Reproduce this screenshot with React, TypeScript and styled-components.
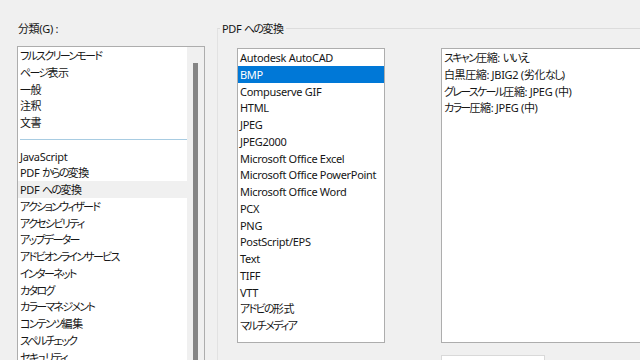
import * as React from 'react';
import styled, { createGlobalStyle } from 'styled-components';

const GlobalStyle = createGlobalStyle`
  html, body {
    margin: 0;
    padding: 0;
    background: #f0f0f0;
    overflow: hidden;
  }
  body {
    font-family: "Noto Sans", "Noto Sans CJK JP", sans-serif;
    font-size: 11px;
    font-feature-settings: "palt";
    color: #161616;
  }
`;

const ROW = 16.75;

const Dialog = styled.div`
  display: flex;
  align-items: flex-start;
  width: 640px;
  height: 360px;
  padding: 20px 0 0 17px;
  box-sizing: border-box;
  overflow: hidden;
`;

const CategoryColumn = styled.div`
  display: flex;
  flex-direction: column;
  flex: none;
  width: 188px;
`;

const Caption = styled.div`
  height: 16px;
  line-height: 16px;
  padding-top: 1px;
  margin: 0 0 9px 1px;
`;

const ListBox = styled.div<{ $width: number; $height: number }>`
  display: flex;
  flex: none;
  width: ${({ $width }) => `${$width}px`};
  height: ${({ $height }) => `${$height}px`};
  box-sizing: border-box;
  background: #fff;
  border: 1px solid #adadad;
  overflow: hidden;
`;

const Items = styled.div`
  display: flex;
  flex-direction: column;
  flex: 1;
  min-width: 0;
`;

const Row = styled.div<{ $selected?: boolean; $hover?: boolean }>`
  height: ${ROW}px;
  line-height: ${ROW - 1}px;
  padding: 1px 0 0 2px;
  box-sizing: border-box;
  white-space: nowrap;
  background: ${({ $selected, $hover }) => ($selected ? '#0078d7' : $hover ? '#f0f0f0' : 'transparent')};
  color: ${({ $selected }) => ($selected ? '#fff' : '#161616')};
`;

const Separator = styled.div`
  display: flex;
  align-items: center;
  height: ${ROW}px;
  padding-left: 2px;

  &::after {
    content: '';
    flex: 1;
    height: 1px;
    background: #a8cce2;
  }
`;

const ScrollTrack = styled.div`
  flex: none;
  width: 17px;
  padding: 16px 0 0 6px;
  box-sizing: border-box;
  background: #f0f0f0;
`;

const ScrollThumb = styled.div`
  width: 5px;
  height: 100%;
  background: #858585;
`;

const Group = styled.div`
  display: flex;
  flex-direction: column;
  flex: none;
  width: 460px;
  height: 400px;
  margin: 8px 0 0 12px;
  border-top: 1px solid #dcdcdc;
  border-left: 1px solid #e2e2e2;
`;

const Legend = styled.div`
  align-self: flex-start;
  height: 16px;
  line-height: 16px;
  margin: -8px 0 0 2px;
  padding: 0 2px;
  background: #f0f0f0;
`;

const GroupBody = styled.div`
  display: flex;
  align-items: flex-start;
  gap: 56px;
  margin-top: 11px;
  padding-left: 19px;
`;

const SettingsColumn = styled.div`
  display: flex;
  flex-direction: column;
  gap: 12px;
`;

const Field = styled.div`
  width: 104px;
  height: 22px;
  box-sizing: border-box;
  background: #fff;
  border: 1px solid #d9d9d9;
`;

// Windows UI fonts set kana much narrower than Noto does, so runs are tightened per script
const Kana = styled.span`
  letter-spacing: -1.7px;
`;

const Kanji = styled.span`
  letter-spacing: -0.4px;
`;

const Latin = styled.span`
  letter-spacing: -0.3px;
`;

const Label = ({ text }: { text: string }) => (
  <>
    {text
      .split(/([\u3040-\u30ff]+|[\u4e00-\u9fff]+)/)
      .filter((part) => part !== '')
      .map((part, i) =>
        /[\u3040-\u30ff]/.test(part) ? (
          <Kana key={i}>{part}</Kana>
        ) : /[\u4e00-\u9fff]/.test(part) ? (
          <Kanji key={i}>{part}</Kanji>
        ) : (
          <Latin key={i}>{part}</Latin>
        ),
      )}
  </>
);

const categoriesTop = ['フルスクリーンモード', 'ページ表示', '一般', '注釈', '文書'];

const categoriesBottom = [
  'JavaScript',
  'PDF からの変換',
  'PDF への変換',
  'アクションウィザード',
  'アクセシビリティ',
  'アップデーター',
  'アドビオンラインサービス',
  'インターネット',
  'カタログ',
  'カラーマネジメント',
  'コンテンツ編集',
  'スペルチェック',
  'セキュリティ',
];

const formats = [
  'Autodesk AutoCAD',
  'BMP',
  'Compuserve GIF',
  'HTML',
  'JPEG',
  'JPEG2000',
  'Microsoft Office Excel',
  'Microsoft Office PowerPoint',
  'Microsoft Office Word',
  'PCX',
  'PNG',
  'PostScript/EPS',
  'Text',
  'TIFF',
  'VTT',
  'アドビの形式',
  'マルチメディア',
];

const settings = [
  'スキャン圧縮: いいえ',
  '白黒圧縮: JBIG2 (劣化なし)',
  'グレースケール圧縮: JPEG (中)',
  'カラー圧縮: JPEG (中)',
];

export default function App() {
  return (
    <>
      <GlobalStyle />
      <Dialog>
        <CategoryColumn>
          <Caption>
            <Label text="分類(G) :" />
          </Caption>
          <ListBox $width={188} $height={330}>
            <Items>
              {categoriesTop.map((name) => (
                <Row key={name}>
                  <Label text={name} />
                </Row>
              ))}
              <Separator />
              {categoriesBottom.map((name) => (
                <Row key={name} $hover={name === 'PDF への変換'}>
                  <Label text={name} />
                </Row>
              ))}
            </Items>
            <ScrollTrack>
              <ScrollThumb />
            </ScrollTrack>
          </ListBox>
        </CategoryColumn>

        <Group>
          <Legend>
            <Label text="PDF への変換" />
          </Legend>
          <GroupBody>
            <ListBox $width={148} $height={295}>
              <Items>
                {formats.map((name) => (
                  <Row key={name} $selected={name === 'BMP'}>
                    <Label text={name} />
                  </Row>
                ))}
              </Items>
            </ListBox>
            <SettingsColumn>
              <ListBox $width={220} $height={295}>
                <Items>
                  {settings.map((line) => (
                    <Row key={line}>
                      <Label text={line} />
                    </Row>
                  ))}
                </Items>
              </ListBox>
              <Field />
            </SettingsColumn>
          </GroupBody>
        </Group>
      </Dialog>
    </>
  );
}
